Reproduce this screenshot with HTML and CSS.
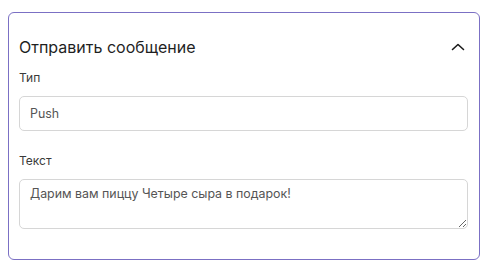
FILE: index.html
```html
<!DOCTYPE html>
<html lang="ru">
<head>
    <meta charset="UTF-8">
    <title>Отправить сообщение</title>
    <link rel="stylesheet" href="styles.css">
</head>
<body>

<div class="card">
    <!-- Header -->
    <div class="card-header">
        <h3>Отправить сообщение</h3>
        <svg class="chevron" width="14" height="8" viewBox="0 0 14 8">
            <path d="M1.5 6.5 L7 1.5 L12.5 6.5" fill="none" stroke="#1a1a1a" stroke-width="1.6" stroke-linecap="round" stroke-linejoin="round"/>
        </svg>
    </div>

    <div class="input-group">
        <label>Тип</label>
        <input type="text" class="field" value="Push">
    </div>

    <div class="input-group">
        <label>Текст</label>
        <textarea class="field area">Дарим вам пиццу Четыре сыра в подарок!</textarea>
    </div>
</div>

</body>
</html>
```

FILE: styles.css
```css
* {
    margin: 0;
    padding: 0;
    box-sizing: border-box;
}

body {
    font-family: 'Inter', 'Noto Sans', sans-serif;
    background: #fff;
    padding: 12px 8px;
}

.card {
    width: 472px;
    height: 248px;
    border: 1px solid #7b70c4;
    border-radius: 6px;
    padding: 24px 11px 0 10px;
}

.card-header {
    display: flex;
    justify-content: space-between;
    align-items: center;
    height: 20px;
    margin-bottom: 13px;
}

.card-header h3 {
    font-size: 16px;
    font-weight: 400;
    color: #1f1f1f;
    line-height: 20px;
}

.chevron {
    margin-right: 3px;
    margin-top: -1px;
}

.input-group {
    display: flex;
    flex-direction: column;
    gap: 10px;
    margin-bottom: 22px;
}

.input-group label {
    font-size: 12px;
    line-height: 16px;
    color: #3a3a3a;
}

.field {
    width: 449px;
    height: 35px;
    border: 1px solid #d6d6d6;
    border-radius: 5px;
    padding: 0 10px;
    font-family: inherit;
    font-size: 12.4px;
    color: #555;
    background: #fff;
    outline: none;
}

.area {
    height: 50px;
    padding: 6px 10px;
    line-height: 16px;
    resize: vertical;
}
```
